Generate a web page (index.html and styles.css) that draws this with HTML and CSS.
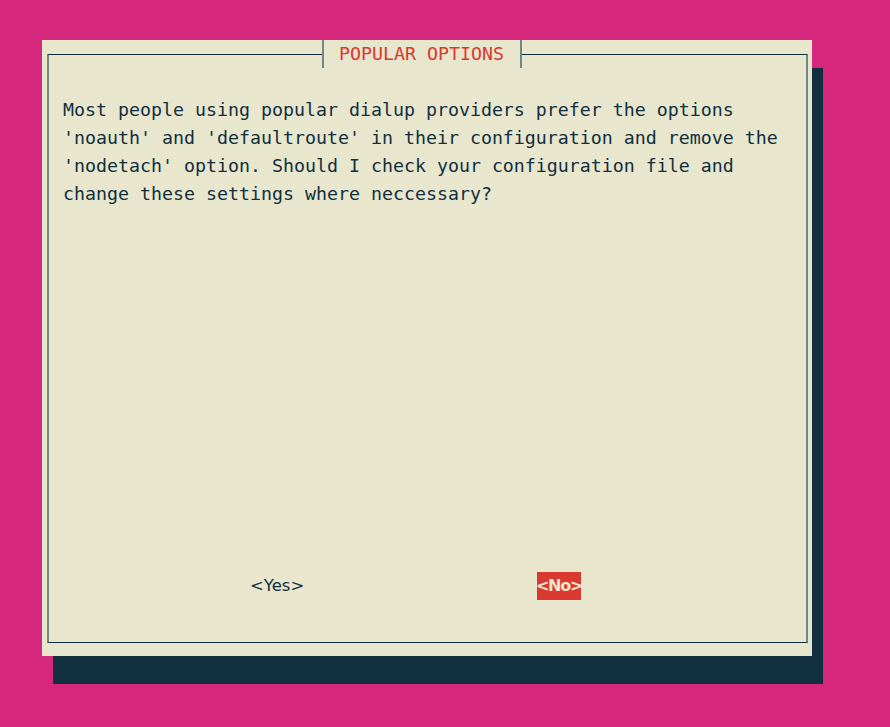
FILE: index.html
```html
<!DOCTYPE html>
<html>
<head>
<meta charset="utf-8">
<link rel="stylesheet" href="styles.css">
</head>
<body>
<div class="dialog">
  <div class="header">
    <div class="seg seg-left"></div>
    <div class="title">POPULAR OPTIONS</div>
    <div class="seg seg-right"></div>
  </div>
  <div class="frame">
    <p class="message">Most people using popular dialup providers prefer the options
'noauth' and 'defaultroute' in their configuration and remove the
'nodetach' option. Should I check your configuration file and
change these settings where neccessary?</p>
    <div class="buttons">
      <span class="btn btn-yes">&lt;Yes&gt;</span>
      <span class="btn btn-no">&lt;No&gt;</span>
    </div>
  </div>
</div>
</body>
</html>
```
FILE: styles.css
```css
html, body {
  margin: 0;
  padding: 0;
}
body {
  background: #d5287d;
  width: 890px;
  height: 727px;
  overflow: hidden;
  font-family: "DejaVu Sans Mono", monospace;
}
.dialog {
  margin: 40px 0 0 42px;
  width: 770px;
  height: 616px;
  box-sizing: border-box;
  padding: 0 4px 13px 5px;
  background: #e8e6cd;
  box-shadow: 11px 28px 0 0 #112f3f;
  display: flex;
  flex-direction: column;
}
.header {
  height: 28px;
  display: flex;
  flex-shrink: 0;
}
.seg {
  align-self: flex-end;
  height: 14px;
  box-sizing: border-box;
  border-top: 1px solid #112f3f;
}
.seg-left {
  width: 275px;
  border-left: 2px solid #6f8884;
}
.seg-right {
  flex: 1;
  border-right: 2px solid #6f8884;
}
.title {
  height: 28px;
  box-sizing: border-box;
  border-left: 2px solid #6f8884;
  border-right: 2px solid #6f8884;
  padding: 0 16px 0 15px;
  color: #d9392e;
  font-size: 18.27px;
  line-height: 28px;
  white-space: pre;
}
.frame {
  flex: 1;
  box-sizing: border-box;
  border-left: 2px solid #6f8884;
  border-right: 2px solid #6f8884;
  border-bottom: 1px solid #112f3f;
  padding: 28px 0 42px 14px;
  display: flex;
  flex-direction: column;
}
.message {
  margin: 0;
  white-space: pre;
  color: #112f3f;
  font-size: 18.27px;
  line-height: 28px;
}
.buttons {
  margin-top: auto;
  height: 28px;
  display: flex;
  align-items: center;
}
.btn {
  height: 28px;
  line-height: 28px;
  font-family: "DejaVu Sans", sans-serif;
  font-size: 16.5px;
  white-space: pre;
}
.btn-yes {
  margin-left: 187px;
  width: 60px;
  color: #112f3f;
}
.btn-no {
  margin-left: 227px;
  width: 44px;
  display: flex;
  justify-content: center;
  background: #d9392e;
  color: #efe6cf;
  font-weight: bold;
  font-size: 16px;
  letter-spacing: -1.3px;
}
```
